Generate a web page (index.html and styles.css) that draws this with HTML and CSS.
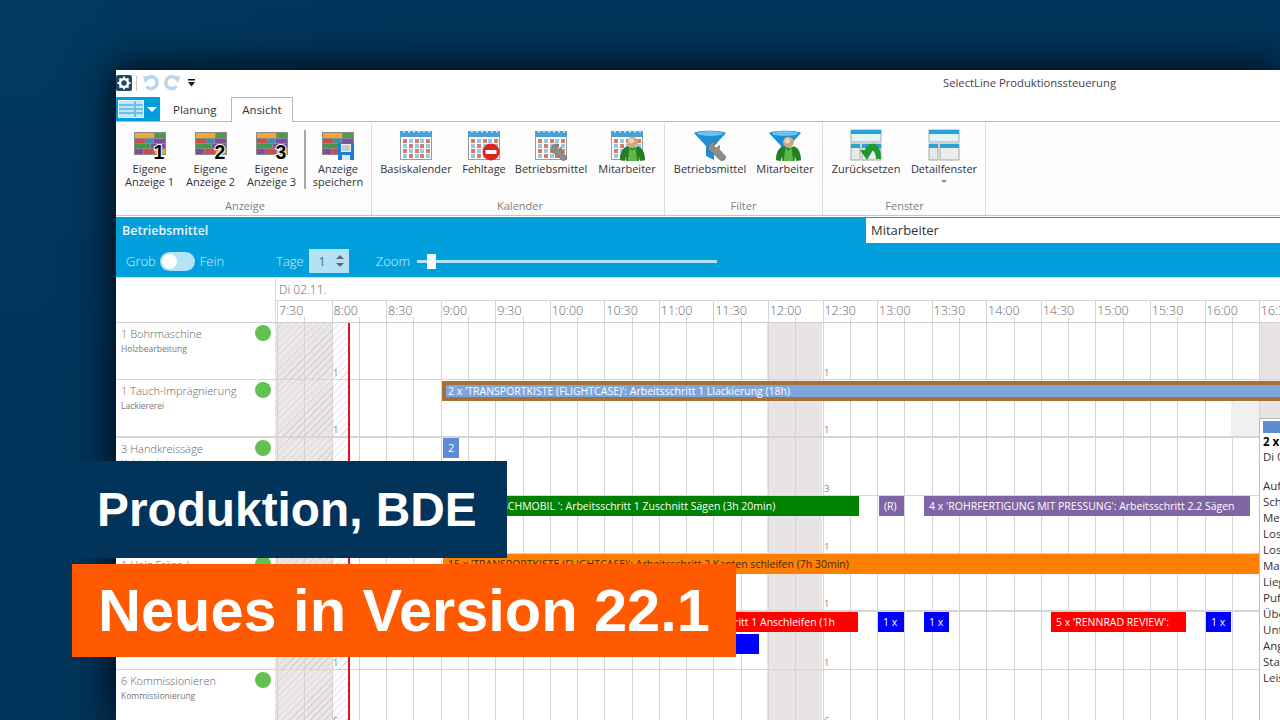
FILE: index.html
```html
<!DOCTYPE html>
<html lang="de">
<head>
    <meta charset="UTF-8">
    <title>SelectLine Produktionssteuerung - Neues in Version 22.1</title>
    <link rel="stylesheet" href="styles.css">
</head>
<body>
    <!-- wiederverwendete Icons -->
    <svg class="icon-defs" width="0" height="0">
        <symbol id="i-grid" viewBox="0 0 32 32">
            <rect x="0" y="3" width="32" height="23" fill="#8b8b8b"/>
            <rect x="1" y="4" width="19" height="5" fill="#f0a733"/><rect x="21" y="4" width="10" height="5" fill="#4e9a52"/>
            <rect x="1" y="10" width="10" height="4" fill="#cf4a4a"/><rect x="12" y="10" width="7" height="4" fill="#3d8fb0"/><rect x="20" y="10" width="11" height="4" fill="#7b4f9e"/>
            <rect x="1" y="15" width="15" height="4" fill="#3f9a4a"/><rect x="17" y="15" width="14" height="4" fill="#7b4f9e"/>
            <rect x="1" y="20" width="8" height="5" fill="#7b4f9e"/><rect x="10" y="20" width="10" height="5" fill="#cf4a4a"/><rect x="21" y="20" width="10" height="5" fill="#f0a733"/>
        </symbol>
        <symbol id="i-cal" viewBox="0 0 32 32">
            <rect x="0.5" y="2.5" width="31" height="28" fill="#fff" stroke="#9a9a9a"/>
            <rect x="0" y="2" width="32" height="6" fill="#4a9fd6"/>
            <path d="M3 0.5h2v3h-2zM8 0.5h2v3h-2zM13 0.5h2v3h-2zM18 0.5h2v3h-2zM23 0.5h2v3h-2zM28 0.5h2v3h-2z" fill="#dfe8ee"/>
            <g fill="#d97a68">
                <rect x="3" y="10" width="4" height="4"/><rect x="15" y="10" width="4" height="4"/><rect x="26" y="10" width="4" height="4"/>
                <rect x="9" y="15" width="4" height="4"/><rect x="20" y="15" width="4" height="4"/>
                <rect x="3" y="20" width="4" height="4"/><rect x="15" y="20" width="4" height="4"/><rect x="26" y="20" width="4" height="4"/>
                <rect x="9" y="25" width="4" height="4"/><rect x="20" y="25" width="4" height="4"/>
            </g>
            <g fill="#92cbe0">
                <rect x="9" y="10" width="4" height="4"/><rect x="20" y="10" width="4" height="4"/>
                <rect x="3" y="15" width="4" height="4"/><rect x="15" y="15" width="4" height="4"/><rect x="26" y="15" width="4" height="4"/>
                <rect x="9" y="20" width="4" height="4"/><rect x="20" y="20" width="4" height="4"/>
                <rect x="3" y="25" width="4" height="4"/><rect x="15" y="25" width="4" height="4"/><rect x="26" y="25" width="4" height="4"/>
            </g>
        </symbol>
        <symbol id="i-person" viewBox="0 0 32 32">
            <path d="M0 31c0-8 2-15 9-18l7 3 7-3c7 3 9 10 9 18l-6 1-2-6v6H8v-6l-2 6z" fill="#237f22"/>
            <path d="M12 15l4 4 4-4 2 17H10z" fill="#5cb848"/>
            <circle cx="16" cy="8" r="7" fill="#d3a97a"/>
            <circle cx="14.500" cy="6" r="3.500" fill="#ecd6ba"/>
        </symbol>
        <symbol id="i-wrench" viewBox="0 0 32 32">
            <path d="M16 3C11 0 3 2 2 10c0 4 2 8 7 9l13 12c3 1 8-1 8-6L19 13c1-1 1.500-3 1-6l-5 4-4-2V6z" fill="#8c8c8c" stroke="#5f5f5f"/>
        </symbol>
        <symbol id="i-funnel" viewBox="0 0 32 32">
            <path d="M0 4c4-3 28-3 32 0L20 17v14l-8-4V17z" fill="#1b8fd8"/>
            <ellipse cx="16" cy="4.500" rx="13" ry="2.500" fill="#6cc1ee"/>
        </symbol>
        <symbol id="i-window" viewBox="0 0 32 32">
            <rect x="1" y="1" width="30" height="12" fill="#e4f3f8" stroke="#a5a5a5"/>
            <rect x="1" y="1" width="30" height="4" fill="#29a2d8"/>
            <rect x="1" y="15" width="9" height="16" fill="#e8e8e8" stroke="#a5a5a5"/>
            <rect x="1" y="15" width="9" height="4" fill="#29a2d8"/>
            <rect x="12" y="15" width="19" height="16" fill="#ececec" stroke="#a5a5a5"/>
            <rect x="12" y="15" width="19" height="4" fill="#29a2d8"/>
        </symbol>
    </svg>

    <div class="stage">
        <div class="window">
            <div class="titlebar">
                <div class="qat">
                    <span class="app-icon">
                        <svg width="16" height="16" viewBox="0 0 16 16"><circle cx="8" cy="8" r="4" fill="none" stroke="#fff" stroke-width="2.500"/><path d="M8 1.500v3M8 11.500v3M1.500 8h3M11.500 8h3M3.500 3.500l2 2M10.500 10.500l2 2M3.500 12.500l2-2M10.500 5.500l2-2" stroke="#fff" stroke-width="1.800"/></svg>
                    </span>
                    <span class="qat-sep"></span>
                    <svg width="16" height="16" viewBox="0 0 16 16"><path d="M3.500 11.500A6 6 0 1 0 3 4.500" fill="none" stroke="#b9d5ec" stroke-width="3.500"/><path d="M0 1l7 1-5 6z" fill="#b9d5ec"/></svg>
                    <svg class="qat-redo" width="16" height="16" viewBox="0 0 16 16"><path d="M12.500 11.500A6 6 0 1 1 13 4.500" fill="none" stroke="#b9d5ec" stroke-width="3.500"/><path d="M16 1l-7 1 5 6z" fill="#b9d5ec"/></svg>
                    <svg class="qat-more" width="7" height="8" viewBox="0 0 7 8"><path d="M0 0h7v1.500H0zM0 3h7L3.500 7.500z" fill="#111"/></svg>
                </div>
                <div class="app-title">SelectLine Produktionssteuerung</div>
            </div>

            <div class="tabs">
                <div class="file-btn">
                    <svg width="26" height="18" viewBox="0 0 26 18"><rect x="0.500" y="0.500" width="25" height="17" fill="#bfe7f8" stroke="#e8f7fd"/><path d="M1 5h15M1 9h15M1 13h15M17 1v16M18 5h7M18 9h7M18 13h7" stroke="#1a9ad4"/></svg>
                    <span class="file-caret"></span>
                </div>
                <div class="tab">Planung</div>
                <div class="tab active">Ansicht</div>
            </div>

            <div class="ribbon">
                <div class="group group-anzeige">
                    <div class="group-items">
                        <div class="rb-btn w61">
                            <svg class="rb-icon" viewBox="0 0 32 32"><use href="#i-grid"/><text x="25" y="30" class="digit">1</text></svg>
                            <span>Eigene<br>Anzeige 1</span>
                        </div>
                        <div class="rb-btn w61">
                            <svg class="rb-icon" viewBox="0 0 32 32"><use href="#i-grid"/><text x="25" y="30" class="digit">2</text></svg>
                            <span>Eigene<br>Anzeige 2</span>
                        </div>
                        <div class="rb-btn w61">
                            <svg class="rb-icon" viewBox="0 0 32 32"><use href="#i-grid"/><text x="25" y="30" class="digit">3</text></svg>
                            <span>Eigene<br>Anzeige 3</span>
                        </div>
                        <div class="rb-sep"></div>
                        <div class="rb-btn w62">
                            <svg class="rb-icon" viewBox="0 0 32 32"><use href="#i-grid"/><rect x="16" y="14" width="16" height="17" fill="#1a7fd0"/><rect x="19" y="15" width="10" height="8" fill="#e8eef2"/><path d="M20 17h8M20 19h8M20 21h8" stroke="#9aa"/><rect x="20" y="26" width="8" height="5" fill="#dfe9f2"/></svg>
                            <span>Anzeige<br>speichern</span>
                        </div>
                    </div>
                    <div class="group-label">Anzeige</div>
                </div>

                <div class="group group-kalender">
                    <div class="group-items">
                        <div class="rb-btn w80">
                            <svg class="rb-icon" viewBox="0 0 32 32"><use href="#i-cal"/></svg>
                            <span>Basiskalender</span>
                        </div>
                        <div class="rb-btn w56">
                            <svg class="rb-icon" viewBox="0 0 32 32"><use href="#i-cal"/><circle cx="23" cy="23" r="8.500" fill="#e0211c"/><rect x="17.500" y="21" width="11" height="4" fill="#fff"/></svg>
                            <span>Fehltage</span>
                        </div>
                        <div class="rb-btn w78">
                            <svg class="rb-icon" viewBox="0 0 32 32"><use href="#i-cal"/><use href="#i-wrench" x="15" y="14" width="18" height="18"/></svg>
                            <span>Betriebsmittel</span>
                        </div>
                        <div class="rb-btn w74">
                            <svg class="rb-icon" viewBox="0 0 32 32"><use href="#i-cal"/><use href="#i-person" x="9" y="7" width="25" height="25"/></svg>
                            <span>Mitarbeiter</span>
                        </div>
                    </div>
                    <div class="group-label">Kalender</div>
                </div>

                <div class="group group-filter">
                    <div class="group-items">
                        <div class="rb-btn w90">
                            <svg class="rb-icon" viewBox="0 0 32 32"><use href="#i-funnel"/><use href="#i-wrench" x="13" y="12" width="20" height="20"/></svg>
                            <span>Betriebsmittel</span>
                        </div>
                        <div class="rb-btn w60">
                            <svg class="rb-icon" viewBox="0 0 32 32"><use href="#i-funnel"/><use href="#i-person" x="7" y="7" width="25" height="25"/></svg>
                            <span>Mitarbeiter</span>
                        </div>
                    </div>
                    <div class="group-label">Filter</div>
                </div>

                <div class="group group-fenster">
                    <div class="group-items">
                        <div class="rb-btn w84">
                            <svg class="rb-icon" viewBox="0 0 32 32"><use href="#i-window"/><path d="M10 21h5c1-4 5-7 9-6 5 1 7 6 7 15h-5c0-5-2-9-5-9h-2h4l-6 10z" fill="#1f9a2c"/></svg>
                            <span>Zurücksetzen</span>
                        </div>
                        <div class="rb-btn w72">
                            <svg class="rb-icon" viewBox="0 0 32 32"><use href="#i-window"/></svg>
                            <span>Detailfenster</span>
                            <i class="rb-caret"></i>
                        </div>
                    </div>
                    <div class="group-label">Fenster</div>
                </div>
            </div>

            <div class="panel-head">
                <div class="panel-title">Betriebsmittel</div>
                <div class="panel-side">Mitarbeiter</div>
            </div>
            <div class="panel-tools">
                <span class="tool-label">Grob</span>
                <span class="toggle"><i></i></span>
                <span class="tool-label">Fein</span>
                <span class="tool-label tage">Tage</span>
                <span class="spinner">
                    <b>1</b>
                    <svg width="10" height="16" viewBox="0 0 10 16"><path d="M1 6l4-4 4 4zM1 10l4 4 4-4z" fill="#5f6b72"/></svg>
                </span>
                <span class="tool-label zoom">Zoom</span>
                <span class="slider"><i></i></span>
            </div>

            <div class="gantt">
                <div class="gantt-head">
                    <div class="head-spacer"></div>
                    <div class="head-scale">
                        <div class="day">Di 02.11.</div>
                        <div class="times">
                            <span>7:30</span><span>8:00</span><span>8:30</span><span>9:00</span><span>9:30</span><span>10:00</span><span>10:30</span><span>11:00</span><span>11:30</span><span>12:00</span><span>12:30</span><span>13:00</span><span>13:30</span><span>14:00</span><span>14:30</span><span>15:00</span><span>15:30</span><span>16:00</span><span>16:30</span>
                        </div>
                    </div>
                </div>

                <div class="row first">
                    <div class="res"><div class="res-name">1 Bohrmaschine</div><div class="res-sub">Holzbearbeitung</div><i class="dot"></i></div>
                    <div class="track">
                        <small class="cap c1">1</small><small class="cap c2">1</small>
                    </div>
                </div>
                <div class="row heavy">
                    <div class="res"><div class="res-name">1 Tauch-Imprägnierung</div><div class="res-sub">Lackiererei</div><i class="dot"></i></div>
                    <div class="track">
                        <div class="bar bar-brown"><span>2 x 'TRANSPORTKISTE (FLIGHTCASE)': Arbeitsschritt 1 Llackierung (18h)</span></div>
                        <div class="soft"></div>
                        <small class="cap c1">1</small><small class="cap c2">1</small>
                    </div>
                </div>
                <div class="row">
                    <div class="res"><div class="res-name">3 Handkreissäge</div><div class="res-sub">Holzbearbeitung</div><i class="dot"></i></div>
                    <div class="track">
                        <div class="bar steel b-two">2</div>
                        <small class="cap c2">3</small>
                    </div>
                </div>
                <div class="row">
                    <div class="res"></div>
                    <div class="track">
                        <div class="bar green b-tisch">5 x 'BÜROTISCHMOBIL ': Arbeitsschritt 1 Zuschnitt Sägen (3h 20min)</div>
                        <div class="bar purple b-r">(R)</div>
                        <div class="bar purple b-rohr">4 x 'ROHRFERTIGUNG MIT PRESSUNG': Arbeitsschritt 2.2 Sägen</div>
                        <small class="cap c2">1</small>
                    </div>
                </div>
                <div class="row heavy">
                    <div class="res"><div class="res-name">1 Holz-Fräse /</div><i class="dot"></i></div>
                    <div class="track">
                        <div class="bar orange b-kante">15 x 'TRANSPORTKISTE (FLIGHTCASE)': Arbeitsschritt 2 Kanten schleifen (7h 30min)</div>
                        <small class="cap c2">1</small>
                    </div>
                </div>
                <div class="row">
                    <div class="res"></div>
                    <div class="track">
                        <div class="bar red b-schliff">Arbeitsschritt 1 Anschleifen (1h</div>
                        <div class="bar blue b-low"></div>
                        <div class="bar blue b-x1">1 x</div>
                        <div class="bar blue b-x2">1 x</div>
                        <div class="bar red b-renn">5 x 'RENNRAD REVIEW':</div>
                        <div class="bar blue b-x3">1 x</div>
                        <small class="cap c1">1</small><small class="cap c2">1</small>
                    </div>
                </div>
                <div class="row">
                    <div class="res"><div class="res-name">6 Kommissionieren</div><div class="res-sub">Kommissionierung</div><i class="dot"></i></div>
                    <div class="track">
                        <small class="cap c1">6</small><small class="cap c2">6</small>
                    </div>
                </div>

                <div class="now-line"></div>

                <!-- Tooltip zum Balken -->
                <div class="tip">
                    <div class="tip-color"></div>
                    <div class="tip-title">2 x 'TRANSPORTKISTE'</div>
                    <div class="tip-date">Di 02.11.2021</div>
                    <ul>
                        <li>Auftrag</li><li>Schritt</li><li>Menge</li><li>Losgröße</li><li>Los</li><li>Maschine</li><li>Liegezeit</li><li>Puffer</li><li>Übergang</li><li>Unterbrechung</li><li>Angefangen</li><li>Status</li><li>Leistung</li>
                    </ul>
                </div>
            </div>
        </div>

        <div class="banner banner-top">Produktion, BDE</div>
        <div class="banner banner-main">Neues in Version 22.1</div>
    </div>
</body>
</html>
```

FILE: styles.css
```css
* {
    box-sizing: border-box;
}
body {
    margin: 0;
    font-family: "Open Sans", "Liberation Sans", sans-serif;
    background-color: #02335a;
}
.icon-defs {
    position: absolute;
}
.stage {
    position: relative;
    width: 1280px;
    height: 720px;
    overflow: hidden;
    padding: 70px 0 0 116px;
    background: radial-gradient(circle at 0 0, #013a62, #02335a 420px);
}
.window {
    position: relative;
    width: 1164px;
    height: 650px;
    background-color: #fff;
    box-shadow: 0 0 38px 4px rgba(0, 0, 0, 0.8);
    display: flex;
    flex-direction: column;
}

/* Titelleiste */
.titlebar {
    height: 27px;
    flex: none;
    position: relative;
    padding-top: 5px;
}
.qat {
    display: flex;
    align-items: center;
    height: 16px;
}
.app-icon {
    width: 16px;
    height: 16px;
    background-color: #1c4a63;
    border-radius: 2px;
    display: block;
}
.app-icon svg {
    display: block;
}
.qat-sep {
    width: 1px;
    height: 16px;
    margin: 0 6px 0 4px;
    background-color: #c8c8c8;
}
.qat-redo {
    margin-left: 5px;
}
.qat-more {
    margin-left: 8px;
}
.app-title {
    position: absolute;
    left: 827px;
    top: 5px;
    font-size: 11.250px;
    line-height: 16px;
    color: #444;
    white-space: nowrap;
}

/* Tabs */
.tabs {
    height: 25px;
    flex: none;
    display: flex;
    align-items: stretch;
    border-bottom: 1px solid #b8b8b8;
}
.file-btn {
    width: 44px;
    height: 24px;
    background-color: #009fdc;
    display: flex;
    align-items: center;
    padding-left: 2px;
}
.file-caret {
    margin-left: 3px;
    border-left: 5px solid transparent;
    border-right: 5px solid transparent;
    border-top: 5px solid #fff;
}
.tab {
    width: 44px;
    font-size: 11.500px;
    line-height: 25px;
    color: #333;
    margin-left: 13px;
    white-space: nowrap;
}
.tab.active {
    width: 62px;
    height: 25px;
    margin-left: 14px;
    text-align: center;
    background-color: #fff;
    border: 1px solid #b8b8b8;
    border-bottom: 0;
    line-height: 23px;
}

/* Ribbon */
.ribbon {
    height: 94px;
    flex: none;
    display: flex;
    background-color: #fdfdfd;
    border-bottom: 1px solid #c4c4c4;
    margin-bottom: 1px;
}
.group {
    display: flex;
    flex-direction: column;
    border-right: 1px solid #dcdcdc;
    margin-top: 1px;
}
.group-anzeige {
    width: 256px;
    padding-left: 3px;
}
.group-kalender {
    width: 293px;
    padding-left: 4px;
}
.group-filter {
    width: 158px;
}
.group-fenster {
    width: 163px;
    padding-left: 1px;
}
.group-items {
    display: flex;
    flex: 1;
}
.group-label {
    font-size: 11px;
    line-height: 16px;
    height: 17px;
    text-align: center;
    color: #808080;
}
.rb-btn {
    position: relative;
    flex: none;
    padding-top: 6px;
    text-align: center;
    font-size: 11px;
    line-height: 13px;
    color: #333;
}
.rb-icon {
    display: block;
    width: 32px;
    height: 32px;
    margin: 0 auto 1px;
    overflow: visible;
}
.digit {
    font-family: "Liberation Sans", sans-serif;
    font-weight: 700;
    font-size: 19.500px;
    text-anchor: middle;
    fill: #000;
    stroke: #fff;
    stroke-width: 2px;
    paint-order: stroke;
}
.w56 { width: 56px; }
.w60 { width: 60px; }
.w61 { width: 61px; }
.w62 { width: 62px; }
.w72 { width: 72px; }
.w74 { width: 74px; }
.w78 { width: 78px; }
.w80 { width: 80px; }
.w84 { width: 84px; }
.w90 { width: 90px; }
.rb-sep {
    width: 2px;
    height: 59px;
    margin: 7px 1px 0 2px;
    background-color: #a8a8a8;
}
.rb-caret {
    display: block;
    width: 0;
    margin: 5px auto 0;
    border-left: 3px solid transparent;
    border-right: 3px solid transparent;
    border-top: 3px solid #888;
}

/* blauer Kopf */
.panel-head {
    height: 26px;
    flex: none;
    display: flex;
    justify-content: space-between;
    background-color: #019fdb;
}
.panel-title {
    padding: 5px 0 0 6px;
    font-size: 12.500px;
    line-height: 18px;
    font-weight: 600;
    color: #e9f8fe;
}
.panel-side {
    width: 414px;
    height: 25px;
    margin-top: 1px;
    padding-left: 5px;
    background-color: #fff;
    font-size: 13px;
    line-height: 25px;
    color: #333;
}
.panel-tools {
    height: 35px;
    flex: none;
    display: flex;
    align-items: center;
    padding: 2px 0 0 10px;
    background-color: #019fdb;
    border-bottom: 1px solid #bfe9f8;
}
.tool-label {
    font-size: 13px;
    font-weight: 300;
    color: #d4f1fb;
}
.toggle {
    width: 35px;
    height: 19px;
    margin: 0 5px 0 4px;
    padding: 2px;
    border-radius: 10px;
    background-color: #b6e3f6;
}
.toggle i {
    display: block;
    width: 15px;
    height: 15px;
    border-radius: 50%;
    background-color: #fff;
}
.tage {
    margin-left: 52px;
}
.spinner {
    width: 40px;
    height: 24px;
    margin-left: 5px;
    display: flex;
    align-items: center;
    justify-content: flex-end;
    gap: 9px;
    padding-right: 4px;
    background-color: #b3e2f6;
}
.spinner b {
    font-size: 13px;
    font-weight: 400;
    color: #56707c;
}
.zoom {
    margin-left: 27px;
}
.slider {
    position: relative;
    width: 300px;
    height: 3px;
    margin-left: 7px;
    background-color: #b3e5f8;
}
.slider i {
    position: absolute;
    left: 10px;
    top: -6px;
    width: 9px;
    height: 15px;
    background-color: #fff;
}

/* Gantt */
.gantt {
    position: relative;
    flex: 1;
}
.gantt-head {
    display: flex;
    height: 45px;
    border-bottom: 1px solid #d0d0d0;
}
.head-spacer {
    width: 159px;
    flex: none;
}
.head-scale {
    flex: 1;
    border-left: 1px solid #dcdcdc;
}
.day {
    height: 23px;
    padding: 3px 0 0 3px;
    font-size: 12px;
    line-height: 17px;
    font-weight: 300;
    color: #666;
    border-bottom: 1px solid #d8d8d8;
}
.times {
    display: flex;
    height: 21px;
    padding-left: 1px;
    background-image:
        repeating-linear-gradient(90deg, transparent 0 1px, #d4d4d4 1px 2px, transparent 2px 54.560px),
        repeating-linear-gradient(90deg, transparent 0 28.280px, #d4d4d4 28.280px 29.280px, transparent 29.280px 54.560px);
    background-repeat: no-repeat;
    background-size: 100% 100%, 100% 5px;
    background-position: 0 0, 0 100%;
}
.times span {
    flex: none;
    width: 54.560px;
    padding: 1px 0 0 2px;
    font-size: 12.500px;
    line-height: 18px;
    font-weight: 300;
    color: #666;
}
.row {
    display: flex;
    height: 58px;
    border-bottom: 1px solid #d6d6d6;
}
.row.first {
    height: 57px;
}
.row.heavy {
    border-bottom-width: 2px;
}
.res {
    position: relative;
    width: 159px;
    flex: none;
    padding: 2px 0 0 5px;
}
.res-name {
    font-size: 11px;
    line-height: 17px;
    font-weight: 300;
    color: #666;
}
.res-sub {
    font-size: 8.500px;
    line-height: 13px;
    color: #777;
}
.dot {
    position: absolute;
    right: 4px;
    top: 2px;
    width: 16px;
    height: 16px;
    border-radius: 50%;
    background-color: #62c150;
}
.track {
    position: relative;
    flex: 1;
    overflow: hidden;
    background-color: #fff;
    background-image:
        repeating-linear-gradient(90deg, transparent 0 2px, #d4d4d4 2px 3px, transparent 3px 27.280px),
        repeating-linear-gradient(135deg, #d8d3d3 0 1px, #ebe7e7 1px 5px),
        repeating-linear-gradient(135deg, #e2dfdf 0 1px, #fff 1px 5px),
        linear-gradient(#e8e4e4, #e8e4e4),
        linear-gradient(#e8e4e4, #e8e4e4);
    background-repeat: no-repeat;
    background-size: 100% 100%, 57px 100%, 16px 100%, 55px 100%, 40px 100%;
    background-position: 0 0, 0 0, 57px 0, 492px 0, 984px 0;
}
.soft {
    position: absolute;
    left: 956px;
    top: 22px;
    width: 28px;
    height: 35px;
    background-color: #f0f0f0;
    z-index: 0;
}
.cap {
    position: absolute;
    bottom: 0;
    font-size: 9.500px;
    line-height: 12px;
    color: #888;
}
.c1 {
    left: 58px;
}
.c2 {
    left: 549px;
}
.bar {
    position: absolute;
    top: 0;
    height: 20px;
    padding-left: 5px;
    font-size: 10.500px;
    line-height: 20px;
    color: #fff;
    white-space: nowrap;
    overflow: hidden;
    z-index: 1;
}
.bar-brown {
    left: 167px;
    right: 0;
    top: 1px;
    padding: 4px 0 4px 4px;
    background-color: #a5733a;
}
.bar-brown span {
    display: block;
    height: 12px;
    padding-left: 2px;
    line-height: 12px;
    background-color: #7fa6dc;
}
.steel { background-color: #5b8cd4; }
.green { background-color: #008000; }
.purple { background-color: #7f65a3; }
.orange { background-color: #ff8000; color: #4a2400; }
.red { background-color: #ff0000; }
.blue { background-color: #0000ff; }
.b-two { left: 168px; width: 16px; font-size: 11px; }
.b-tisch { left: 168px; width: 416px; padding-left: 2px; }
.b-r { left: 604px; width: 25px; }
.b-rohr { left: 649px; width: 326px; }
.b-kante { left: 168px; right: 0; }
.b-schliff { left: 168px; width: 415px; padding-left: 240px; }
.b-low { left: 168px; top: 22px; width: 316px; }
.b-x1 { left: 603px; width: 26px; }
.b-x2 { left: 649px; width: 25px; }
.b-renn { left: 776px; width: 135px; }
.b-x3 { left: 931px; width: 25px; }
.now-line {
    position: absolute;
    left: 232px;
    top: 45px;
    bottom: 0;
    width: 2px;
    background-color: #e0141c;
    z-index: 2;
}
.tip {
    position: absolute;
    left: 1143px;
    top: 140px;
    width: 137px;
    bottom: 0;
    overflow: hidden;
    padding: 2px 3px;
    background-color: #fff;
    border: 1px solid #bdbdbd;
    font-size: 11.500px;
    line-height: 16px;
    color: #333;
    white-space: nowrap;
    z-index: 3;
}
.tip-color {
    height: 12px;
    background-color: #5b8cd4;
}
.tip-title {
    margin-top: 1px;
    font-weight: 700;
    color: #000;
}
.tip-date {
    margin-top: -1px;
}
.tip ul {
    list-style: none;
    margin: 13px 0 0;
    padding: 0;
}

/* Einblendungen */
.banner {
    position: absolute;
    color: #fff;
    font-family: "Liberation Sans", sans-serif;
    font-weight: 700;
    white-space: nowrap;
    z-index: 5;
}
.banner-top {
    left: 72px;
    top: 461px;
    width: 435px;
    height: 97px;
    padding-left: 25px;
    font-size: 47.800px;
    line-height: 97px;
    background-color: #02335a;
}
.banner-main {
    left: 72px;
    top: 564px;
    width: 664px;
    height: 93px;
    padding-left: 26px;
    font-size: 59.500px;
    line-height: 93px;
    background-color: #ff5a00;
}
```
